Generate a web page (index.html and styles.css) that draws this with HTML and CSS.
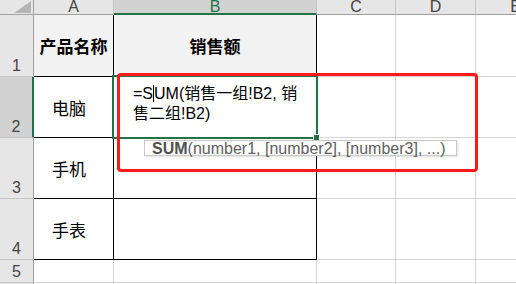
FILE: index.html
```html
<!DOCTYPE html>
<html>
<head>
<meta charset="utf-8">
<link rel="stylesheet" href="styles.css">
</head>
<body>
<div class="sheet">
  <div class="grid">
    <div class="hd corner">
      <svg class="tri" width="17" height="12" viewBox="0 0 17 12"><polygon points="0,12 17,12 17,0" fill="#b5b5b5"/></svg>
    </div>
    <div class="hd col">A</div>
    <div class="hd col sel">B</div>
    <div class="hd col">C</div>
    <div class="hd col">D</div>
    <div class="hd col">E</div>

    <div class="hd row">1</div>
    <div class="c t shade bold">产品名称</div>
    <div class="c t shade bold">销售额</div>
    <div class="c"></div>
    <div class="c"></div>
    <div class="c"></div>

    <div class="hd row rsel">2</div>
    <div class="c t data">电脑</div>
    <div class="c t edit">
      <div class="formula">=S<span class="caret"></span>UM(销售一组!B2, 销售二组!B2)</div>
    </div>
    <div class="c"></div>
    <div class="c"></div>
    <div class="c"></div>

    <div class="hd row">3</div>
    <div class="c t data">手机</div>
    <div class="c t"></div>
    <div class="c"></div>
    <div class="c"></div>
    <div class="c"></div>

    <div class="hd row">4</div>
    <div class="c t data">手表</div>
    <div class="c t"></div>
    <div class="c"></div>
    <div class="c"></div>
    <div class="c"></div>

    <div class="hd row">5</div>
    <div class="c"></div>
    <div class="c"></div>
    <div class="c"></div>
    <div class="c"></div>
    <div class="c"></div>

    <div class="hd row">6</div>
    <div class="c"></div>
    <div class="c"></div>
    <div class="c"></div>
    <div class="c"></div>
    <div class="c"></div>
  </div>

  <div class="selection"><span class="handle"></span></div>
  <div class="tooltip"><b>SUM</b>(number1, [number2], [number3], ...)</div>
  <div class="redbox"></div>
</div>
</body>
</html>
```

FILE: styles.css
```css
html, body {
  margin: 0;
  padding: 0;
  background: #ffffff;
  overflow: hidden;
}
.sheet {
  position: relative;
  width: 516px;
  height: 284px;
  overflow: hidden;
  font-family: "Liberation Sans", "Noto Sans CJK SC", sans-serif;
}
.grid {
  display: grid;
  grid-template-columns: 34px 80px 203px 79px 80px 80px;
  grid-template-rows: 15px 62px 61px 61px 61px 23px 1fr;
  height: 100%;
  width: 556px;
}
.grid > div {
  box-sizing: border-box;
}
.hd {
  background: #e6e6e6;
  color: #444444;
  font-size: 16px;
  border-right: 1px solid #c6c6c6;
  border-bottom: 1px solid #c6c6c6;
}
.corner {
  border-right: 1px solid #9f9f9f;
  border-bottom: 1px solid #9f9f9f;
  display: flex;
  justify-content: flex-end;
  align-items: flex-end;
  padding: 0 2px 1px 0;
}
.tri {
  display: block;
}
.col {
  border-bottom: 1px solid #9f9f9f;
  text-align: center;
  line-height: 14px;
  overflow: hidden;
}
.col.sel {
  background: #d2d2d2;
  color: #217346;
  border-bottom: 2px solid #217346;
  line-height: 13px;
}
.row {
  border-right: 1px solid #9f9f9f;
  display: flex;
  justify-content: center;
  align-items: flex-end;
  line-height: 16px;
  padding-bottom: 2px;
}
.row.rsel {
  background: #d2d2d2;
  border-right: 2px solid #217346;
}
.c {
  border-right: 1px solid #d4d4d4;
  border-bottom: 1px solid #d4d4d4;
  font-family: "Noto Sans CJK SC", sans-serif;
  font-size: 17px;
  color: #000;
}
.c.t {
  border-right: 1px solid #000;
  border-bottom: 1px solid #000;
}
.c.shade {
  background: #f2f2f2;
  display: flex;
  align-items: center;
  justify-content: center;
}
.c.bold {
  font-weight: bold;
}
.c.data {
  display: flex;
  align-items: center;
  padding-left: 18px;
}
.c.edit {
  padding: 7px 0 0 19px;
}
.formula {
  font-family: "Liberation Sans", "Noto Sans CJK SC", sans-serif;
  font-size: 16px;
  line-height: 20px;
  width: 177px;
}
.caret {
  display: inline-block;
  width: 0;
  height: 17px;
  border-left: 1px solid #000;
  vertical-align: -3px;
}
.selection {
  position: absolute;
  left: 112px;
  top: 75px;
  width: 206px;
  height: 64px;
  box-sizing: border-box;
  border: 2px solid #217346;
}
.handle {
  position: absolute;
  right: -4px;
  bottom: -4px;
  width: 5px;
  height: 5px;
  background: #217346;
  border: 1px solid #fff;
}
.tooltip {
  position: absolute;
  left: 144px;
  top: 140px;
  width: 313px;
  height: 16px;
  box-sizing: border-box;
  background: #fff;
  border: 1px solid #c8c8c8;
  box-shadow: 1px 1px 2px rgba(0,0,0,0.12);
  font-family: "Liberation Sans", sans-serif;
  font-size: 16px;
  line-height: 15px;
  color: #606060;
  padding-left: 7px;
  white-space: nowrap;
  overflow: visible;
}
.tooltip b {
  color: #505050;
}
.redbox {
  position: absolute;
  left: 117px;
  top: 73px;
  width: 361px;
  height: 99px;
  box-sizing: border-box;
  border: 3px solid #ff1a1a;
  border-radius: 4px;
}
```
